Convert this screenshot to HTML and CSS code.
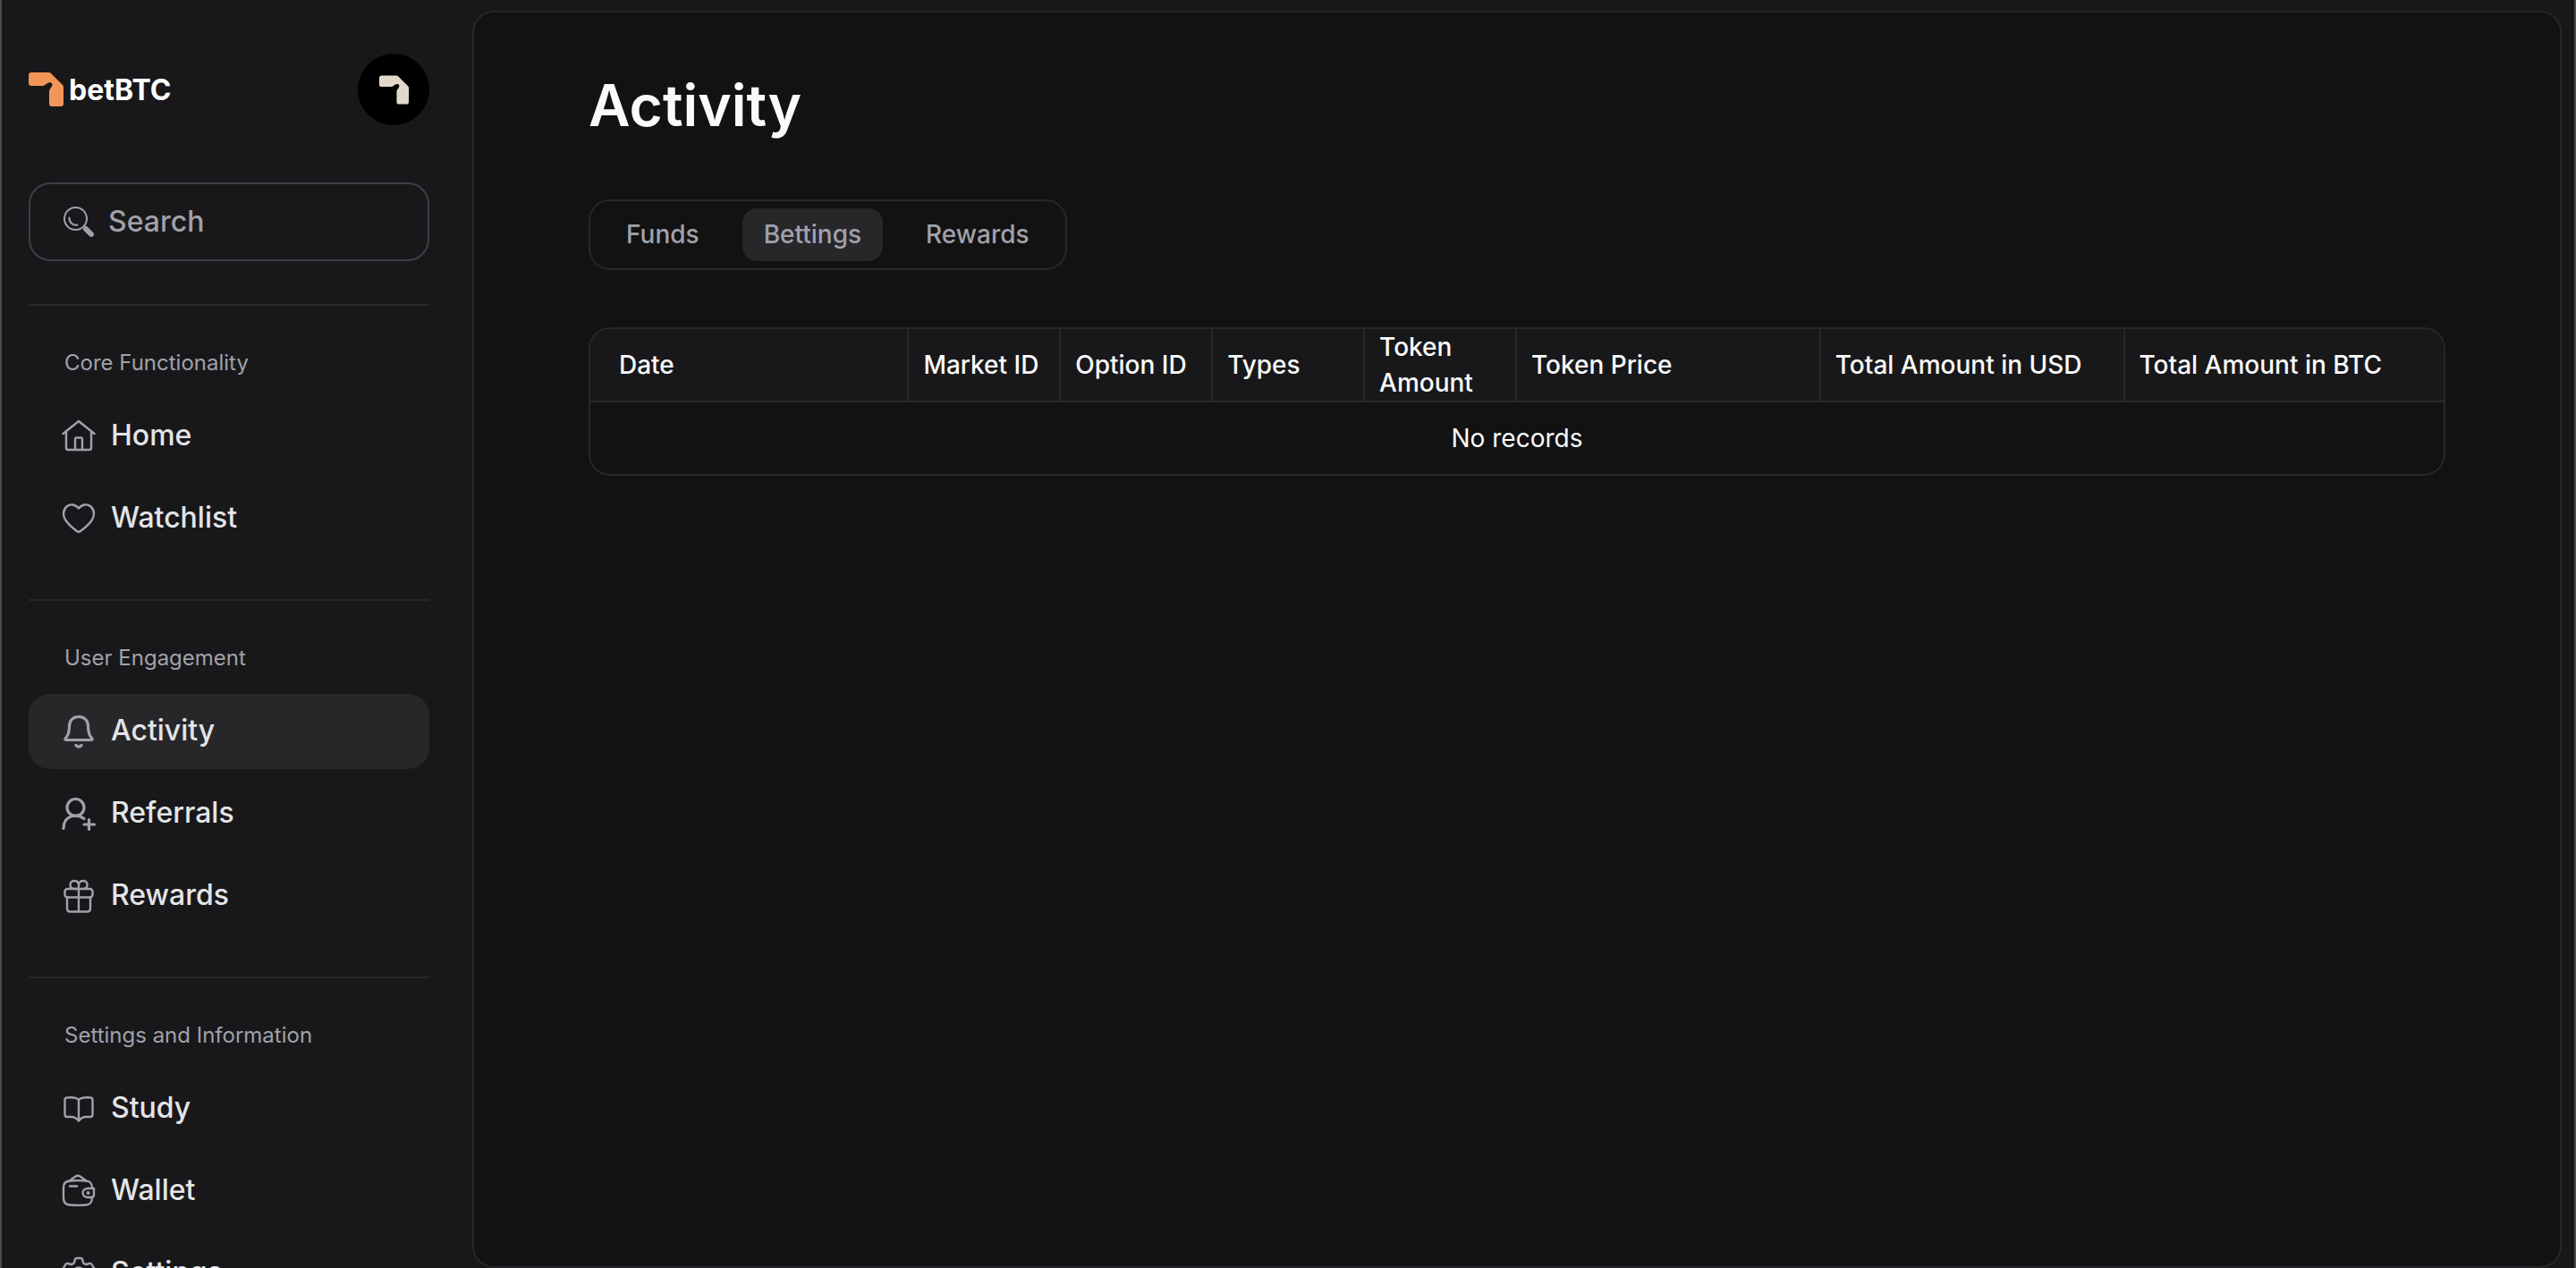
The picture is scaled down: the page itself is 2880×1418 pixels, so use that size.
FILE: index.html
```html
<!DOCTYPE html>
<html lang="en">
<head>
<meta charset="utf-8">
<meta name="viewport" content="width=device-width, initial-scale=1">
<title>Activity - betBTC</title>
<link rel="stylesheet" href="styles.css">
</head>
<body>
<div class="app">
  <aside class="sidebar">
    <header class="brand">
      <a class="logo" href="#">
        <svg class="logo-mark" viewBox="0 0 39 38" aria-hidden="true"><path d="M3 0H22.500Q24 0 25 1L38 14Q39 15 39 16.500V35Q39 38 36 38H26Q23 38 23 35V21.500Q23 20 24 18.500C26.500 15.500 27.500 13 25 11.500C22.500 10.500 19.500 13 17.500 14.500Q16.500 15 15 15H3Q0 15 0 12V3Q0 0 3 0Z"/></svg>
        <span>betBTC</span>
      </a>
      <button class="avatar" type="button" aria-label="Account">
        <svg viewBox="0 0 39 38" aria-hidden="true"><path d="M3 0H22.500Q24 0 25 1L38 14Q39 15 39 16.500V35Q39 38 36 38H26Q23 38 23 35V21.500Q23 20 24 18.500C26.500 15.500 27.500 13 25 11.500C22.500 10.500 19.500 13 17.500 14.500Q16.500 15 15 15H3Q0 15 0 12V3Q0 0 3 0Z"/></svg>
      </button>
    </header>

    <label class="search">
      <svg class="search-icon" viewBox="0 0 36 36" aria-hidden="true"><circle cx="15.500" cy="14.500" r="12.500"/><path d="M8.500 13.500A7.500 7.500 0 0 0 17.500 21.500"/><path class="handle" d="M27 26L33 32"/></svg>
      <input type="search" placeholder="Search" aria-label="Search">
    </label>

    <nav class="nav">
      <section class="group">
        <h2>Core Functionality</h2>
        <a class="item" href="#">
          <svg viewBox="0 0 40 40" aria-hidden="true"><path d="M2.500 17L20 3L37.500 17M6 14.500V33Q6 35 8 35H32Q34 35 34 33V14.500M16 35V23Q16 21.500 17.500 21.500H22.500Q24 21.500 24 23V35"/></svg>
          <span>Home</span>
        </a>
        <a class="item" href="#">
          <svg viewBox="0 0 40 40" aria-hidden="true"><path d="M20 8.500C16.500 4 10.500 3 6.500 6.500C2 10.500 2 17 5.500 22C9 27 14 31 18 34Q20 35.500 22 34C26 31 31 27 34.500 22C38 17 38 10.500 33.500 6.500C29.500 3 23.500 4 20 8.500Z"/></svg>
          <span>Watchlist</span>
        </a>
      </section>
      <section class="group">
        <h2>User Engagement</h2>
        <a class="item active" href="#" aria-current="page">
          <svg class="bold" viewBox="0 0 40 40" aria-hidden="true"><path d="M20 3.500C13.500 3.500 9.500 8 9.500 14C9.500 21 8 25 5 28Q4.500 29.500 6 29.500H34Q35.500 29.500 35 28C32 25 30.500 21 30.500 14C30.500 8 26.500 3.500 20 3.500ZM17 35.500Q20 38.500 23 35.500"/></svg>
          <span>Activity</span>
        </a>
        <a class="item" href="#">
          <svg class="bold" viewBox="0 0 40 40" aria-hidden="true"><circle cx="16.500" cy="13" r="9.500"/><path d="M3 36.500C3 22 17 19 26 25.500M31.500 26.500V37.500M26 32H37.500"/></svg>
          <span>Referrals</span>
        </a>
        <a class="item" href="#">
          <svg viewBox="0 0 40 40" aria-hidden="true"><rect x="4.500" y="12" width="31" height="9.500" rx="3"/><path d="M7 21.500V34Q7 37.500 10.500 37.500H29.500Q33 37.500 33 34V21.500M20 6.500V37.500M20 12H15C9 12 9 3 15 3C19 3 20 6 20 8C20 6 21 3 25 3C31 3 31 12 25 12"/></svg>
          <span>Rewards</span>
        </a>
      </section>
      <section class="group">
        <h2>Settings and Information</h2>
        <a class="item" href="#">
          <svg viewBox="0 0 40 40" aria-hidden="true"><path d="M20 10C17 7 12 7 7 7.500Q4.500 7.500 4.500 10V26.500Q4.500 29 7 29H12C16 29 18 31 20 33.500C22 31 24 29 28 29H33Q35.500 29 35.500 26.500V10Q35.500 7.500 33 7.500C28 7 23 7 20 10V32.500"/></svg>
          <span>Study</span>
        </a>
        <a class="item" href="#">
          <svg viewBox="0 0 40 40" aria-hidden="true"><path d="M35 17C35 11 33 9 28 8.500C22 8 16 8 11 8.500C5 9 3 11 3 17V27C3 33 5 35 11 35.500C16 36 22 36 28 35.500C33 35 35 33 35 27M9.500 8.500L16.500 3.500Q19 2 21.500 3.500L28.500 8.500M10 14.500H18M37 17H30.500C22.500 17 22.500 27 30.500 27H34Q37 27 37 24Z"/><circle class="dot" cx="30.500" cy="22" r="2"/></svg>
          <span>Wallet</span>
        </a>
        <a class="item" href="#">
          <svg viewBox="0 0 40 40" aria-hidden="true"><path d="M17.500 3H22.500Q23.500 3 24 4L25 8Q26 9.500 28 10L32 9Q34 8.500 35 10.500L37 14Q38 15.500 36.500 17L34 20L36.500 23Q38 24.500 37 26L35 29.500Q34 31.500 32 31L28 30Q26 30.500 25 32L24 36Q23.500 37 22.500 37H17.500Q16.500 37 16 36L15 32Q14 30.500 12 30L8 31Q6 31.500 5 29.500L3 26Q2 24.500 3.500 23L6 20L3.500 17Q2 15.500 3 14L5 10.500Q6 8.500 8 9L12 10Q14 9.500 15 8L16 4Q16.500 3 17.500 3Z"/><circle cx="20" cy="20" r="6.500"/></svg>
          <span>Settings</span>
        </a>
      </section>
    </nav>
  </aside>

  <main class="panel">
    <h1>Activity</h1>
    <div class="tabs" role="tablist">
      <button type="button" role="tab">Funds</button>
      <button type="button" role="tab" class="selected" aria-selected="true">Bettings</button>
      <button type="button" role="tab">Rewards</button>
    </div>
    <div class="table-card">
      <table>
        <colgroup>
          <col class="first"><col class="narrow"><col class="narrow"><col class="narrow"><col class="narrow"><col class="wide"><col class="wide"><col>
        </colgroup>
        <thead>
          <tr><th>Date</th><th>Market ID</th><th>Option ID</th><th>Types</th><th>Token Amount</th><th>Token Price</th><th>Total Amount in USD</th><th>Total Amount in BTC</th></tr>
        </thead>
        <tbody>
          <tr><td colspan="8">No records</td></tr>
        </tbody>
      </table>
    </div>
  </main>
</div>
</body>
</html>
```
FILE: styles.css
```css
* {
  box-sizing: border-box;
}

body {
  margin: 0;
  background: #18181a;
  color: #fafafa;
  font-family: Inter, "Liberation Sans", sans-serif;
  font-size: 28px;
}

button,
input {
  font: inherit;
}

.app {
  display: flex;
  height: 100vh;
  overflow: hidden;
  border: solid #4a4a4b;
  border-width: 0 2px;
}

/* Sidebar */
.sidebar {
  flex: none;
  width: 526px;
  padding: 60px 48px 0 30px;
  overflow: hidden;
}

.brand {
  display: flex;
  align-items: center;
  justify-content: space-between;
  margin-bottom: 64px;
}

.logo {
  display: flex;
  align-items: center;
  gap: 6px;
  color: #fff;
  font-size: 32px;
  font-weight: 700;
  text-decoration: none;
}

.logo-mark {
  width: 39px;
  height: 38px;
  fill: #f29559;
}

.avatar {
  display: grid;
  place-items: center;
  width: 80px;
  height: 80px;
  padding: 0;
  border: 0;
  border-radius: 50%;
  background: #000;
}

.avatar svg {
  width: 33px;
  height: 33px;
  fill: #e2d9ca;
}

.search {
  display: flex;
  align-items: center;
  gap: 16px;
  height: 88px;
  margin-bottom: 48px;
  padding: 0 35px;
  border: 2px solid #3f3f46;
  border-radius: 24px;
}

.search-icon {
  flex: none;
  width: 36px;
  height: 36px;
  fill: none;
  stroke: #a1a1aa;
  stroke-width: 2;
  stroke-linecap: round;
}

.search-icon .handle {
  stroke-width: 6;
}

.search input {
  flex: 1;
  min-width: 0;
  padding: 0 0 2px;
  border: 0;
  outline: 0;
  background: none;
  color: #fafafa;
  font-size: 32px;
  font-weight: 500;
}

.search input::placeholder {
  color: #a1a1aa;
  opacity: 1;
}

.group {
  display: flex;
  flex-direction: column;
  gap: 8px;
  padding: 48px 0;
  border-top: 2px solid #27272a;
}

.group h2 {
  margin: 0 0 16px;
  padding-left: 40px;
  color: #a1a1aa;
  font-size: 24px;
  font-weight: 400;
  line-height: 32px;
}

.item {
  display: flex;
  align-items: center;
  gap: 16px;
  height: 84px;
  padding: 0 36px;
  border-radius: 24px;
  color: #e4e4e7;
  font-size: 32px;
  font-weight: 500;
  line-height: 40px;
  text-decoration: none;
}

.item.active {
  background: #27272a;
}

.item span {
  padding-bottom: 2px;
}

.item svg {
  width: 40px;
  height: 40px;
  fill: none;
  stroke: #a1a1aa;
  stroke-width: 2.4;
  stroke-linecap: round;
  stroke-linejoin: round;
}

.item svg.bold {
  stroke-width: 3.2;
}

.item .dot {
  fill: #a1a1aa;
  stroke: none;
}

/* Content panel */
.panel {
  flex: 1;
  min-width: 0;
  margin: 12px 14px 0 0;
  padding: 64px 128px;
  border: 2px solid #27272a;
  border-radius: 24px;
  background: #121212;
}

h1 {
  margin: 0 0 65px;
  font-size: 64px;
  font-weight: 600;
  line-height: 80px;
}

.tabs {
  display: flex;
  gap: 24px;
  width: fit-content;
  margin-bottom: 64px;
  padding: 8px 16px;
  border: 2px solid #27272a;
  border-radius: 24px;
}

.tabs button {
  height: 59px;
  padding: 0 24px 2px;
  border: 0;
  border-radius: 16px;
  background: none;
  color: #a1a1aa;
  font-weight: 500;
}

.tabs .selected {
  background: #27272a;
}

.table-card {
  overflow: hidden;
  border: 2px solid #27272a;
  border-radius: 24px;
}

table {
  width: 100%;
  table-layout: fixed;
  border-collapse: separate;
  border-spacing: 0;
  line-height: 40px;
}

col.first {
  width: 17.2%;
}

col.narrow {
  width: 8.2%;
}

col.wide {
  width: 16.4%;
}

th {
  height: 82px;
  padding: 0 16px;
  border-right: 2px solid #27272a;
  border-bottom: 2px solid #27272a;
  background: #18181b;
  font-weight: 500;
  text-align: left;
}

th:first-child {
  padding-left: 32px;
}

th:last-child {
  border-right: 0;
}

td {
  height: 80px;
  padding: 0;
  text-align: center;
}
```
